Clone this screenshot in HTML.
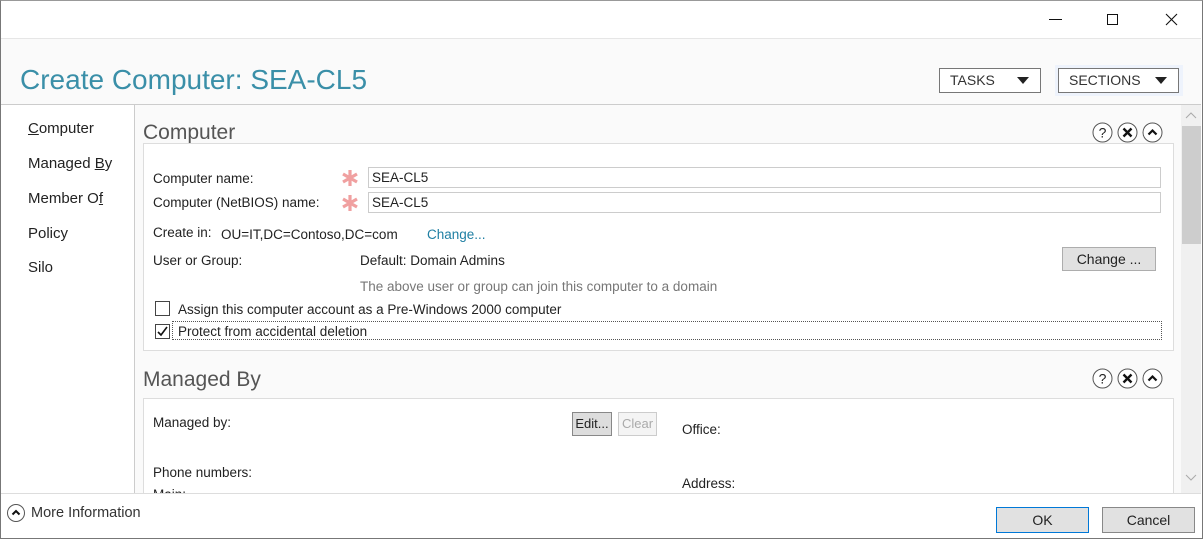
<!DOCTYPE html>
<html><head><meta charset="utf-8"><style>
*{margin:0;padding:0;box-sizing:border-box}
body{width:1203px;height:539px;overflow:hidden;background:#fff;font-family:"Liberation Sans",sans-serif;color:#222;position:relative}
.a{position:absolute;white-space:nowrap}
.t{font-size:13.5px;line-height:16px}
.nav{font-size:15px;left:28px;color:#222}
.btn{position:absolute;border:1px solid #adadad;background:#e1e1e1;font-size:14px;text-align:center}
</style></head><body>
<div class="a" style="left:0;top:0;width:1203px;height:539px;border:1px solid #777;border-top-color:#999"></div>
<div class="a" style="left:1049px;top:19px;width:13px;height:1px;background:#111"></div>
<div class="a" style="left:1107px;top:14px;width:11px;height:11px;border:1px solid #111"></div>
<svg class="a" style="left:1165px;top:13px" width="13" height="13"><path d="M1 1L12 12M12 1L1 12" stroke="#111" stroke-width="1.1"/></svg>
<div class="a" style="left:1px;top:38px;width:1200px;height:66px;background:#fafafa;border-top:1px solid #e6e6e6"></div>
<div class="a" style="left:20px;top:63px;font-size:28px;color:#3a8fa8;line-height:34px">Create Computer: SEA-CL5</div>
<div class="a" style="left:939px;top:68px;width:102px;height:25px;border:1px solid #777;background:#fff;font-size:14px;line-height:23px;padding-left:10px;color:#333">TASKS<svg style="position:absolute;left:77px;top:8px" width="12" height="8"><path d="M0 0H12L6 7Z" fill="#222"/></svg></div>
<div class="a" style="left:1055px;top:65px;width:128px;height:31px;background:#eef3fc"></div>
<div class="a" style="left:1058px;top:68px;width:121px;height:25px;border:1px solid #777;background:#fff;font-size:14px;line-height:23px;padding-left:10px;color:#333">SECTIONS<svg style="position:absolute;left:96px;top:8px" width="12" height="8"><path d="M0 0H12L6 7Z" fill="#222"/></svg></div>
<div class="a" style="left:1px;top:104px;width:1200px;height:1px;background:#ccc"></div>
<div class="a" style="left:1px;top:105px;width:133px;height:388px;background:#fff"></div>
<div class="a" style="left:134px;top:105px;width:1px;height:388px;background:#ccc"></div>
<div class="a nav" style="top:120px"><u>C</u>omputer</div>
<div class="a nav" style="top:155px">Managed <u>B</u>y</div>
<div class="a nav" style="top:190px">Member O<u>f</u></div>
<div class="a nav" style="top:225px">Policy</div>
<div class="a nav" style="top:259px">Silo</div>
<div class="a" style="left:135px;top:105px;width:1046px;height:388px;background:#fafafa"></div>
<div class="a" style="left:143px;top:120px;font-size:21px;color:#555;line-height:26px">Computer</div>
<svg class="a" style="left:1092px;top:122px" width="76" height="22">
<g fill="#fff" stroke="#555" stroke-width="1"><circle cx="10.5" cy="10.5" r="9.5"/><circle cx="35.5" cy="10.5" r="9.5"/><circle cx="60.5" cy="10.5" r="9.5"/></g>
<text x="10.5" y="15.5" font-size="14" text-anchor="middle" font-family="Liberation Sans" fill="#222">?</text>
<path d="M31.5 6.5L39.5 14.5M39.5 6.5L31.5 14.5" stroke="#111" stroke-width="2.4"/>
<path d="M56.5 12.5L60.5 8.5L64.5 12.5" stroke="#111" stroke-width="2.2" fill="none"/>
</svg>
<div class="a" style="left:143px;top:143px;width:1031px;height:208px;border:1px solid #ddd;background:#fff"></div>
<div class="a t" style="left:153px;top:171px">Computer name:</div>
<div class="a t" style="left:153px;top:195px">Computer (NetBIOS) name:</div>
<svg class="a" style="left:341px;top:169px" width="18" height="18"><g stroke="#f0a0a0" stroke-width="3.2"><path d="M9 1V17M2 5L16 13M2 13L16 5"/></g></svg>
<svg class="a" style="left:341px;top:194px" width="18" height="18"><g stroke="#f0a0a0" stroke-width="3.2"><path d="M9 1V17M2 5L16 13M2 13L16 5"/></g></svg>
<div class="a t" style="left:368px;top:167px;width:793px;height:21px;border:1px solid #ccc;padding:2px 0 0 3px">SEA-CL5</div>
<div class="a t" style="left:368px;top:192px;width:793px;height:21px;border:1px solid #ccc;padding:2px 0 0 3px">SEA-CL5</div>
<div class="a t" style="left:153px;top:225px">Create in:</div>
<div class="a t" style="left:221px;top:227px">OU=IT,DC=Contoso,DC=com</div>
<div class="a t" style="left:427px;top:227px;color:#1f7fa3">Change...</div>
<div class="a t" style="left:153px;top:253px">User or Group:</div>
<div class="a t" style="left:360px;top:253px">Default: Domain Admins</div>
<div class="a t" style="left:360px;top:279px;color:#777">The above user or group can join this computer to a domain</div>
<div class="btn" style="left:1062px;top:247px;width:94px;height:24px;line-height:22px">Change ...</div>
<div class="a" style="left:155px;top:301px;width:15px;height:15px;border:1px solid #444;background:#fff"></div>
<div class="a t" style="left:178px;top:302px">Assign this computer account as a Pre-Windows 2000 computer</div>
<div class="a" style="left:155px;top:324px;width:15px;height:15px;border:1px solid #444;background:#fff"></div>
<svg class="a" style="left:156px;top:325px" width="13" height="13"><path d="M2 7L5 10L11 2" stroke="#111" stroke-width="1.6" fill="none"/></svg>
<div class="a" style="left:172px;top:321px;width:990px;height:19px;border:1px dotted #555"></div>
<div class="a t" style="left:178px;top:324px">Protect from accidental deletion</div>
<div class="a" style="left:143px;top:367px;font-size:21px;color:#555;line-height:26px">Managed By</div>
<svg class="a" style="left:1092px;top:368px" width="76" height="22">
<g fill="#fff" stroke="#555" stroke-width="1"><circle cx="10.5" cy="10.5" r="9.5"/><circle cx="35.5" cy="10.5" r="9.5"/><circle cx="60.5" cy="10.5" r="9.5"/></g>
<text x="10.5" y="15.5" font-size="14" text-anchor="middle" font-family="Liberation Sans" fill="#222">?</text>
<path d="M31.5 6.5L39.5 14.5M39.5 6.5L31.5 14.5" stroke="#111" stroke-width="2.4"/>
<path d="M56.5 12.5L60.5 8.5L64.5 12.5" stroke="#111" stroke-width="2.2" fill="none"/>
</svg>
<div class="a" style="left:143px;top:398px;width:1031px;height:100px;border:1px solid #ddd;background:#fff"></div>
<div class="a t" style="left:153px;top:415px">Managed by:</div>
<div class="btn" style="left:572px;top:412px;width:40px;height:24px;line-height:22px;font-size:13px;border-color:#888;background:#ddd">Edit...</div>
<div class="btn" style="left:618px;top:412px;width:39px;height:24px;line-height:22px;font-size:13px;color:#aaa;background:#f4f4f4;border-color:#ccc">Clear</div>
<div class="a t" style="left:682px;top:422px">Office:</div>
<div class="a t" style="left:153px;top:465px">Phone numbers:</div>
<div class="a t" style="left:682px;top:476px">Address:</div>
<div class="a t" style="left:153px;top:487px">Main:</div>
<div class="a" style="left:1181px;top:105px;width:20px;height:388px;background:#f0f0f0"></div>
<div class="a" style="left:1182px;top:126px;width:19px;height:118px;background:#cdcdcd"></div>
<svg class="a" style="left:1185px;top:112px" width="12" height="8"><path d="M1 6L6 1L11 6" stroke="#aaa" fill="none"/></svg>
<svg class="a" style="left:1185px;top:474px" width="12" height="8"><path d="M1 1L6 6L11 1" stroke="#aaa" fill="none"/></svg>
<div class="a" style="left:1px;top:493px;width:1200px;height:44px;background:#fff;border-top:1px solid #ddd"></div>
<svg class="a" style="left:6px;top:503px" width="20" height="20"><circle cx="10" cy="10" r="8.5" fill="#fff" stroke="#555"/><path d="M6.5 11.5L10 8L13.5 11.5" stroke="#111" stroke-width="2" fill="none"/></svg>
<div class="a" style="left:31px;top:505px;font-size:14.5px;color:#333">More Information</div>
<div class="btn" style="left:996px;top:507px;width:93px;height:26px;line-height:24px;border-color:#0078d7">OK</div>
<div class="btn" style="left:1102px;top:507px;width:93px;height:26px;line-height:24px;border-color:#888">Cancel</div>
</body></html>
